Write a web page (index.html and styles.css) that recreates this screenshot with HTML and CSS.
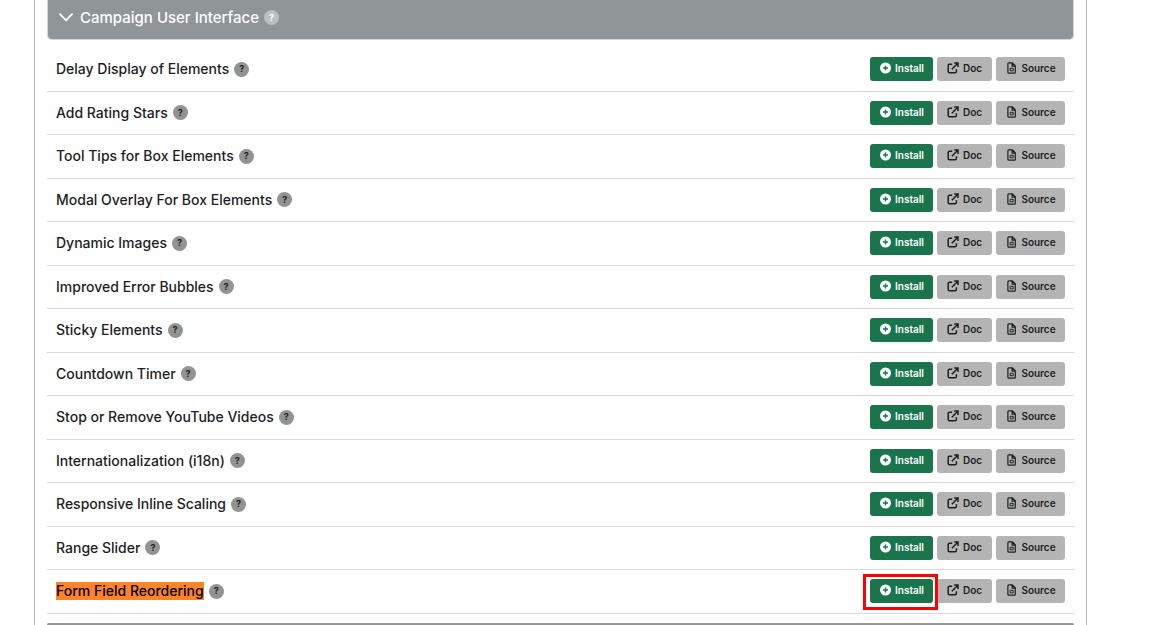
FILE: index.html
```
<!DOCTYPE html>
<html lang="en">
<head>
<meta charset="utf-8">
<title>Campaign User Interface</title>
<link rel="stylesheet" href="styles.css">
</head>
<body>
<svg class="sprite" aria-hidden="true">
  <symbol id="plus" viewBox="0 0 12 12"><circle cx="6.5" cy="6" r="5.5" fill="currentColor"/><path d="M6.5 3.5v5M4 6h5" stroke="#1a754c" stroke-width="1.4"/></symbol>
  <symbol id="open" viewBox="0 0 12 12"><path d="M5.2 2.2H2.6Q1.2 2.2 1.2 3.6V9.4Q1.2 10.8 2.6 10.8H8Q9.4 10.8 9.4 9.4V7.2M7.2 1.1H11V4.9M10.8 1.3L4.8 7.2" fill="none" stroke="currentColor" stroke-width="1.5"/></symbol>
  <symbol id="file" viewBox="0 0 12 12"><path d="M3.9 .8H7.3L10.3 3.8V10.2Q10.3 11.2 9.3 11.2H3.9Q2.9 11.2 2.9 10.2V1.8Q2.9 .8 3.9 .8ZM7.1 1V4.1H10.2" fill="none" stroke="currentColor" stroke-width="1.2"/><path d="M5.1 6.3H8.2V8.8H5.1Z" fill="none" stroke="currentColor" stroke-width="1"/></symbol>
</svg>
<main class="panel">
  <h2 class="group-header">
    <svg class="chevron" viewBox="0 0 14 9" aria-hidden="true"><path d="M1 1.2L7 7.3L13 1.2" fill="none" stroke="currentColor" stroke-width="1.9" stroke-linecap="round" stroke-linejoin="round"/></svg>
    <span>Campaign User Interface</span><span class="help help-light">?</span>
  </h2>
  <ul class="rows" id="rows"></ul>
  <div class="group-header next"></div>
</main>
<script src="rows.js"></script>
</body>
</html>
```
FILE: styles.css
```
* { box-sizing: border-box; }
body {
  margin: 0;
  background: #fff;
  color: #1c1e1f;
  font-family: Inter, "Liberation Sans", sans-serif;
}
.sprite { display: none; }
.panel {
  display: flex;
  flex-direction: column;
  height: 100vh;
  overflow: hidden;
  margin: 0 82px 0 34px;
  padding: 0 12px;
  border: 1px solid #b9b9b9;
  border-width: 0 1px;
}
.group-header {
  display: flex;
  flex: none;
  align-items: center;
  height: 40px;
  margin: 0 0 8px;
  padding: 0 11px 4px;
  border: 1px solid #d3d5e3;
  border-top: 0;
  border-radius: 0 0 5px 5px;
  background: #909598;
  color: #fff;
  font-size: 15px;
  font-weight: 500;
}
.chevron { width: 14px; height: 9px; margin-right: 7px; }
.next {
  flex: 1;
  margin: 9px 0 0;
  padding: 0;
  border: 0;
  border-top: 1px solid #9496a5;
  border-radius: 5px 5px 0 0;
}
.help {
  display: inline-flex;
  align-items: center;
  justify-content: center;
  width: 15px;
  height: 15px;
  margin-left: 5px;
  border-radius: 50%;
  background: #929492;
  color: #1c1e1f;
  font-size: 9px;
  font-weight: 700;
}
.help-light { background: #bcbfc1; color: #fff; }
.rows { flex: none; margin: 0; padding: 0; list-style: none; }
.row {
  display: flex;
  align-items: center;
  height: 44px;
  padding: 0 9px 1px;
  border-bottom: 1px solid #d9d9d9;
}
.row:nth-child(even) { height: 43px; }
.name {
  display: flex;
  align-items: center;
  flex: 1;
  font-size: 14px;
  line-height: 18px;
  font-weight: 500;
}
.name mark { background: #ff8427; color: #000; }
.actions { display: flex; gap: 4px; }
.btn {
  display: flex;
  align-items: center;
  justify-content: center;
  gap: 4px;
  height: 24px;
  padding: 0 0 2px;
  border: 0;
  border-radius: 3px;
  background: #b4b4b4;
  color: #1c1e1f;
  font-family: inherit;
  font-size: 10px;
  font-weight: 600;
  text-decoration: none;
}
.btn svg { width: 12px; height: 12px; }
.install { width: 63px; background: #1a754c; color: #fff; }
.doc { width: 55px; }
.source { width: 69px; }
.spot { position: relative; }
.spot::after {
  content: "";
  position: absolute;
  inset: -5px -5px -7px -7px;
  z-index: 1;
  border: 3px solid #f00;
  pointer-events: none;
}
```
FILE: rows.js
```
const names = [
  "Delay Display of Elements", "Add Rating Stars", "Tool Tips for Box Elements",
  "Modal Overlay For Box Elements", "Dynamic Images", "Improved Error Bubbles",
  "Sticky Elements", "Countdown Timer", "Stop or Remove YouTube Videos",
  "Internationalization (i18n)", "Responsive Inline Scaling", "Range Slider",
  "Form Field Reordering"
];
const found = "Form Field Reordering";
const icon = id => `<svg aria-hidden="true"><use href="#${id}"/></svg>`;
document.getElementById("rows").innerHTML = names.map(name => `
  <li class="row">
    <div class="name">${name === found ? `<mark>${name}</mark>` : `<span>${name}</span>`}<span class="help">?</span></div>
    <div class="actions">
      <div class="${name === found ? "spot" : ""}"><button class="btn install" type="button">${icon("plus")}Install</button></div>
      <a class="btn doc" href="#doc">${icon("open")}Doc</a>
      <a class="btn source" href="#source">${icon("file")}Source</a>
    </div>
  </li>`).join("");
```
